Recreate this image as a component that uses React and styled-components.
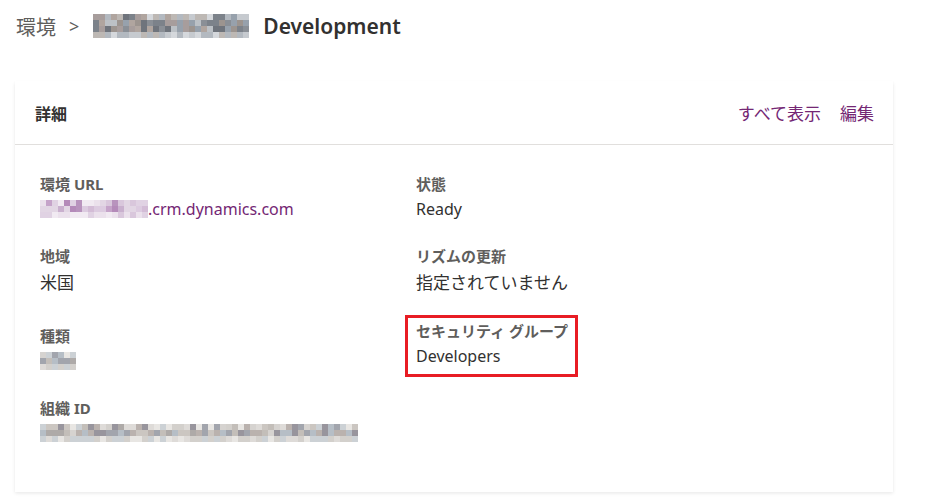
import React from "react";
import styled, { createGlobalStyle } from "styled-components";

const GlobalStyle = createGlobalStyle`
    body {
        margin: 0;
        background: #ffffff;
        font-family: "Segoe UI", "Noto Sans", "Noto Sans CJK JP", sans-serif;
        color: #323130;
    }
`;

const Page = styled.div`
    width: 927px;
    height: 503px;
    padding: 11px 0 0 16px;
    box-sizing: border-box;
    overflow: hidden;
`;

const Breadcrumb = styled.div`
    display: flex;
    align-items: center;
    height: 30px;
    font-size: 20px;
    color: #605e5c;
`;

const Chevron = styled.span`
    margin: 0 14px 0 13px;
    font-size: 18px;
`;

const Title = styled.span`
    margin-left: 14px;
    font-size: 21px;
    font-weight: 600;
    color: #323130;
`;

// redacted text, drawn as a pixel mosaic
const MosaicGrid = styled.span`
    display: inline-grid;
    grid-auto-flow: column;
    grid-template-rows: repeat(${(p) => p.rows}, ${(p) => p.cell}px);
    grid-auto-columns: ${(p) => p.cell}px;
    vertical-align: middle;
    flex-shrink: 0;
`;

const Pixel = styled.span`
    display: block;
`;

const rand = (seed) => {
    let s = seed;
    return () => {
        s = (s * 9301 + 49297) % 233280;
        return s / 233280;
    };
};

const Mosaic = ({ width, rows = 3, cell = 6, palette, edge, seed = 7 }) => {
    const r = rand(seed);
    const cols = Math.round(width / cell);
    const cells = [];
    for (let c = 0; c < cols; c++) {
        for (let row = 0; row < rows; row++) {
            const outer = row === rows - 1 || (row === 0 && r() < 0.5);
            const list = outer ? edge : palette;
            cells.push(<Pixel key={c + "-" + row} style={{ background: list[Math.floor(r() * list.length)] }} />);
        }
    }
    return (
        <MosaicGrid rows={rows} cell={cell}>
            {cells}
        </MosaicGrid>
    );
};

const Card = styled.section`
    margin: 40px 0 0 -1px;
    width: 878px;
    height: 411px;
    background: #fff;
    box-shadow: 0 1.6px 3.6px rgba(0, 0, 0, 0.09), 0 0.3px 0.9px rgba(0, 0, 0, 0.07);
`;

const CardHeader = styled.div`
    display: flex;
    align-items: center;
    justify-content: space-between;
    height: 63px;
    padding: 0 19px 0 20px;
    border-bottom: 1px solid #e1dfdd;
`;

const CardTitle = styled.h2`
    margin: 0;
    font-size: 16px;
    font-weight: 700;
    color: #323130;
`;

const Actions = styled.div`
    display: flex;
    gap: 19px;
`;

const ActionLink = styled.a`
    font-size: 17px;
    color: #742774;
    text-decoration: none;
    cursor: pointer;
`;

const Body = styled.div`
    display: grid;
    grid-template-columns: 376px 1fr;
    padding: 29px 0 0 25px;
`;

const Column = styled.div`
    display: flex;
    flex-direction: column;
`;

const Field = styled.div`
    display: flex;
    flex-direction: column;
    margin-bottom: ${(p) => p.gap}px;
    ${(p) =>
        p.highlight &&
        `
        box-sizing: border-box;
        width: 173px;
        margin-left: -11px;
        margin-top: -6px;
        padding: 3px 0 3px 8px;
        border: 3px solid #e81c24;
    `}
`;

const Label = styled.div`
    font-size: 15px;
    font-weight: 700;
    line-height: 20px;
    color: #605e5c;
`;

const Value = styled.div`
    display: flex;
    align-items: center;
    height: 30px;
    font-size: ${(p) => (p.jp ? 17 : 16)}px;
    color: ${(p) => (p.link ? "#742774" : "#323130")};
    white-space: nowrap;
`;

const purple = ["#d3bcd6", "#c5a3c9", "#b893bd", "#dccbe0", "#c9b0ce", "#b48ab9", "#e2d6e4"];
const purpleEdge = ["#ebe1ec", "#e0d2e3", "#f1eaf2", "#d9c7dc"];
const gray = ["#aeaaa8", "#c3beb9", "#a2a5ad", "#cbc6c1", "#b6bec6", "#bab2ae", "#98959d", "#d6d3d0"];
const grayEdge = ["#dedbd8", "#d3d0cc", "#e8e6e3", "#ccd1d5"];
const dark = ["#8a8f96", "#a79d9c", "#6f747c", "#97a1ac", "#b0a59f", "#7c828a", "#bcc1c6", "#9c948f"];
const darkEdge = ["#c6cacf", "#bdb8b4", "#d5d8dc", "#b3b9c0"];

const left = [
    {
        label: "環境 URL",
        gap: 22,
        value: (
            <>
                <Mosaic width={105} rows={3} cell={6} palette={purple} edge={purpleEdge} seed={3} />
                .crm.dynamics.com
            </>
        ),
        link: true,
    },
    { label: "地域", gap: 30, value: "米国", jp: true },
    { label: "種類", gap: 22, value: <Mosaic width={36} rows={3} cell={6} palette={gray} edge={grayEdge} seed={11} /> },
    { label: "組織 ID", gap: 0, value: <Mosaic width={318} rows={3} cell={6} palette={gray} edge={grayEdge} seed={5} /> },
];

const right = [
    { label: "状態", gap: 22, value: "Ready" },
    { label: "リズムの更新", gap: 25, value: "指定されていません", jp: true },
    { label: "セキュリティ グループ", gap: 0, value: "Developers", highlight: true },
];

const renderField = (f) => (
    <Field key={f.label} gap={f.gap} highlight={f.highlight}>
        <Label>{f.label}</Label>
        <Value link={f.link} jp={f.jp}>
            {f.value}
        </Value>
    </Field>
);

export default function App() {
    return (
        <Page>
            <GlobalStyle />
            <Breadcrumb>
                環境
                <Chevron>&gt;</Chevron>
                <Mosaic width={157} rows={4} cell={6} palette={dark} edge={darkEdge} seed={9} />
                <Title>Development</Title>
            </Breadcrumb>
            <Card>
                <CardHeader>
                    <CardTitle>詳細</CardTitle>
                    <Actions>
                        <ActionLink>すべて表示</ActionLink>
                        <ActionLink>編集</ActionLink>
                    </Actions>
                </CardHeader>
                <Body>
                    <Column>{left.map(renderField)}</Column>
                    <Column>{right.map(renderField)}</Column>
                </Body>
            </Card>
        </Page>
    );
}
